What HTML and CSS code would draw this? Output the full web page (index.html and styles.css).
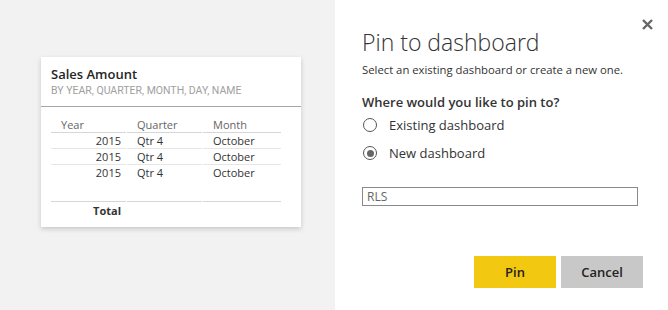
FILE: index.html
```html
<!DOCTYPE html>
<html lang="en">

<head>
    <meta charset="UTF-8">
    <meta name="viewport" content="width=device-width, initial-scale=1.0">
    <title>Pin to dashboard</title>
    <link rel="stylesheet" href="styles.css">
</head>

<body>
    <main class="page">
        <!-- report canvas with the visual being pinned -->
        <section class="canvas">
            <div class="card">
                <div class="card-head">
                    <div class="card-title">Sales Amount</div>
                    <div class="card-sub">BY YEAR, QUARTER, MONTH, DAY, NAME</div>
                </div>
                <table class="grid">
                    <thead>
                        <tr>
                            <th class="c-year">Year</th>
                            <th>Quarter</th>
                            <th>Month</th>
                        </tr>
                    </thead>
                    <tbody>
                        <tr>
                            <td class="num">2015</td>
                            <td>Qtr 4</td>
                            <td>October</td>
                        </tr>
                        <tr>
                            <td class="num">2015</td>
                            <td>Qtr 4</td>
                            <td>October</td>
                        </tr>
                        <tr class="last">
                            <td class="num">2015</td>
                            <td>Qtr 4</td>
                            <td>October</td>
                        </tr>
                        <tr class="total">
                            <td class="num">Total</td>
                            <td></td>
                            <td></td>
                        </tr>
                    </tbody>
                </table>
            </div>
        </section>

        <!-- dialog panel -->
        <section class="panel">
            <button class="close" aria-label="Close">
                <svg width="11" height="11" viewBox="0 0 11 11">
                    <path d="M1 1 L10 10 M10 1 L1 10" stroke="#666" stroke-width="2.4" fill="none" />
                </svg>
            </button>
            <h1 class="title">Pin to dashboard</h1>
            <p class="lead">Select an existing dashboard or create a new one.</p>
            <h2 class="question">Where would you like to pin to?</h2>
            <label class="radio"><span class="dot"></span>Existing dashboard</label>
            <label class="radio on"><span class="dot"></span>New dashboard</label>
            <div class="field">RLS</div>
            <div class="actions">
                <button class="btn pin">Pin</button>
                <button class="btn cancel">Cancel</button>
            </div>
        </section>
    </main>
</body>

</html>
```

FILE: styles.css
```css
* {
    margin: 0;
    padding: 0;
    box-sizing: border-box;
}

body {
    width: 668px;
    height: 310px;
    overflow: hidden;
    font-family: 'Open Sans', 'Noto Sans', sans-serif;
    color: #333;
    background-color: #fff;
}

.page {
    display: flex;
    height: 310px;
}

/* left side */

.canvas {
    width: 335px;
    background-color: #f2f2f2;
    padding: 57px 0 0 41px;
}

.card {
    width: 260px;
    height: 170px;
    background-color: #fff;
    box-shadow: 0 2px 5px rgba(0, 0, 0, 0.18);
}

.card-head {
    height: 50px;
    padding: 8px 10px 0;
    border-bottom: 1px solid #a6a6a6;
}

.card-title {
    font-size: 13px;
    font-weight: 600;
    line-height: 18px;
    color: #252525;
}

.card-sub {
    font-family: 'Roboto', sans-serif;
    font-size: 10.5px;
    line-height: 16px;
    color: #a0a0a0;
}

.grid {
    margin: 10px 0 0 9px;
    width: 232px;
    border-collapse: separate;
    border-spacing: 1px 0;
    font-size: 11px;
    table-layout: fixed;
}

.grid th,
.grid td {
    height: 16px;
    line-height: 15px;
    padding: 0 0 0 10px;
    text-align: left;
    font-weight: 400;
    border-bottom: 1px solid #e6e6e6;
    white-space: nowrap;
}

.grid th {
    color: #666;
    border-bottom-color: #d6d6d6;
}

.grid th:nth-child(1) {
    width: 75px;
}

.grid th:nth-child(2) {
    width: 75px;
}

.grid .num {
    text-align: right;
    padding: 0 5px 0 0;
}

.grid .last td {
    border-bottom: none;
    height: 36px;
    vertical-align: top;
}

.grid .total td {
    border-top: 1px solid #d6d6d6;
    border-bottom: none;
    height: 18px;
    font-weight: 700;
}

/* right side */

.panel {
    position: relative;
    flex: 1;
    padding: 27px 0 0 27px;
}

.close {
    position: absolute;
    top: 18px;
    right: 15px;
    width: 11px;
    height: 11px;
    border: none;
    background: none;
}

.title {
    font-size: 23px;
    font-weight: 300;
    line-height: 30px;
    color: #333;
}

.lead {
    margin-top: 5px;
    font-size: 11.3px;
    line-height: 16px;
}

.question {
    margin-top: 15px;
    font-size: 13px;
    font-weight: 600;
    line-height: 18px;
}

.radio {
    display: flex;
    align-items: center;
    gap: 12px;
    height: 28px;
    font-size: 13px;
    padding-left: 1px;
}

.dot {
    width: 14px;
    height: 14px;
    border: 1.6px solid #555;
    border-radius: 50%;
    display: flex;
    align-items: center;
    justify-content: center;
}

.radio.on .dot::after {
    content: '';
    width: 7px;
    height: 7px;
    border-radius: 50%;
    background-color: #666;
}

.field {
    margin-top: 20px;
    width: 276px;
    height: 19px;
    border: 1px solid #8a8a8a;
    padding-left: 4px;
    font-size: 12px;
    line-height: 17px;
    color: #666;
}

.actions {
    display: flex;
    gap: 5px;
    margin: 50px 0 0 112px;
}

.btn {
    width: 82px;
    height: 32px;
    border: none;
    font-family: 'Open Sans', 'Noto Sans', sans-serif;
    font-size: 13px;
    font-weight: 600;
    color: #222;
}

.pin {
    background-color: #f2c811;
}

.cancel {
    background-color: #c8c8c8;
}
```
